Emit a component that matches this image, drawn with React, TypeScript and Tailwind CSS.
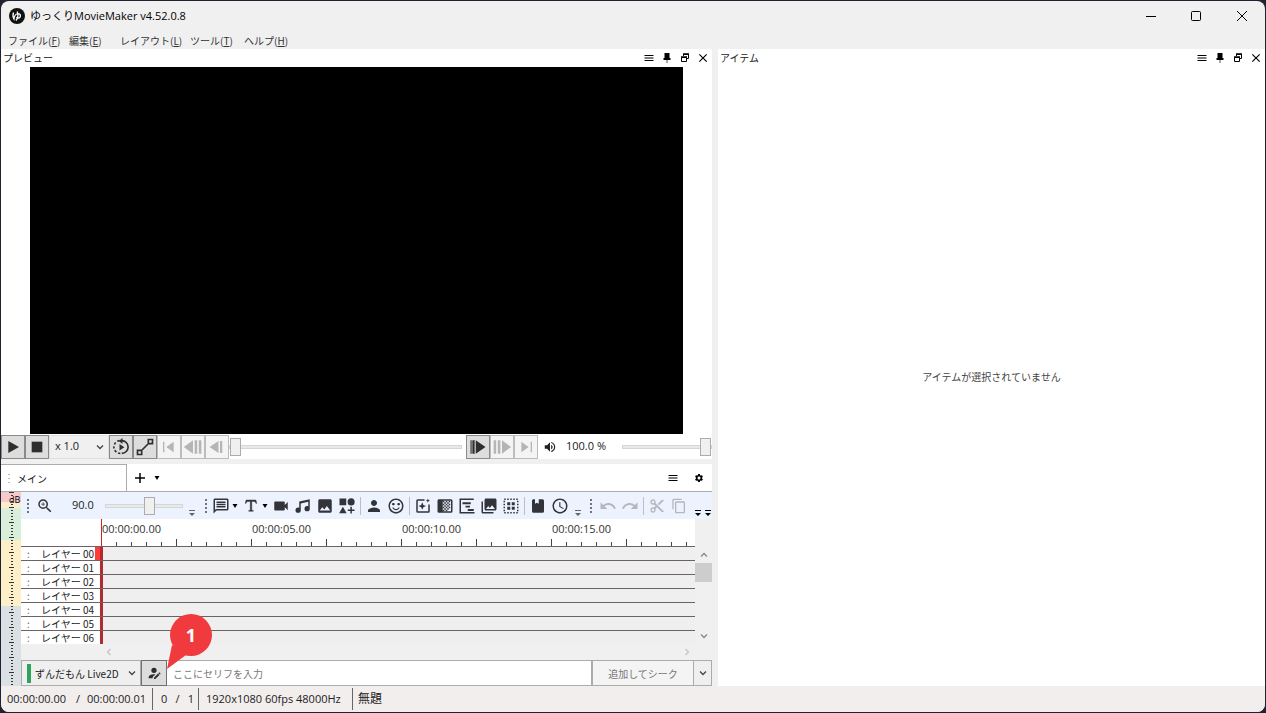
import type { ReactNode } from "react";
import clsx from "clsx";
import {
  MdAccessTime,
  MdClose,
  MdContentCopy,
  MdContentCut,
  MdImage,
  MdMenu,
  MdOutlineMessage,
  MdPerson,
  MdPhotoLibrary,
  MdRedo,
  MdSentimentSatisfiedAlt,
  MdSettings,
  MdUndo,
  MdVideocam,
  MdVolumeUp,
  MdZoomIn,
} from "react-icons/md";

const LATIN = "font-['Open_Sans','Noto_Sans_CJK_JP',sans-serif]";

type IconProps = { children: ReactNode; size?: string };

function Svg({ children, size = "size-[18px]" }: IconProps) {
  return (
    <svg viewBox="0 0 24 24" fill="currentColor" className={clsx("shrink-0", size)} aria-hidden="true">
      {children}
    </svg>
  );
}

const PinIcon = () => (
  <svg viewBox="0 0 10 12" className="h-3 w-2.5" aria-hidden="true">
    <path d="M2.500 1h5v5h1v2h-7V6h1z" fill="#000" />
    <path d="M5 8v3" stroke="#555" />
  </svg>
);

const RestoreIcon = () => (
  <svg viewBox="0 0 10 10" className="size-2.5" fill="none" stroke="#000" aria-hidden="true">
    <path d="M3.500 3V1.500h5v4H7" />
    <path d="M3 1h6" strokeWidth="1.500" />
    <path d="M1.500 4.500h5v4h-5z" />
    <path d="M1 4h6" strokeWidth="1.500" />
  </svg>
);

const TextIcon = () => (
  <Svg>
    <path d="M18.5,4L19.66,8.35L18.7,8.61C18.25,7.74 17.79,6.87 17.26,6.43C16.73,6 16.11,6 15.5,6H13V16.5C13,17 13,17.5 13.33,17.75C13.67,18 14.33,18 15,18V19H9V18C9.67,18 10.33,18 10.67,17.75C11,17.5 11,17 11,16.5V6H8.5C7.89,6 7.27,6 6.74,6.43C6.21,6.87 5.75,7.74 5.3,8.61L4.34,8.35L5.5,4H18.5Z" stroke="currentColor" strokeWidth=".6" />
  </Svg>
);

const MusicIcon = () => (
  <Svg>
    <path d="M21,3V15.5A3.5,3.5 0 0,1 17.5,19A3.5,3.5 0 0,1 14,15.5A3.5,3.5 0 0,1 17.5,12C18.04,12 18.55,12.12 19,12.34V6.47L9,8.6V17.5A3.5,3.5 0 0,1 5.5,21A3.5,3.5 0 0,1 2,17.5A3.5,3.5 0 0,1 5.5,14C6.04,14 6.55,14.12 7,14.34V6L21,3Z" />
  </Svg>
);

const ShapesIcon = () => (
  <Svg>
    <path d="M2 2h9v9H2zM6.500 13l5 8.500h-10zM16.500 13h2v3.500H22v2h-3.500V22h-2v-3.500H13v-2h3.500z" />
    <circle cx="17.500" cy="6.500" r="4.700" />
  </Svg>
);

const EffectIcon = () => (
  <Svg>
    <path d="M14 3H5a2 2 0 0 0-2 2v14a2 2 0 0 0 2 2h14a2 2 0 0 0 2-2v-9h-2v9H5V5h9z" />
    <path d="M11 7l1.500 3.500L16 12l-3.500 1.500L11 17l-1.500-3.500L6 12l3.500-1.500zM18.500 2l.8 2 2 .8-2 .8-.8 2-.8-2-2-.8 2-.8z" />
  </Svg>
);

const CheckerIcon = () => (
  <Svg>
    <path fillRule="evenodd" d="M4 3h16a2 2 0 0 1 2 2v14a2 2 0 0 1-2 2H4a2 2 0 0 1-2-2V5c0-1.100.9-2 2-2zm5 2v14h11V5z" />
    <path d="M9 5h2v2H9zM13 5h2v2h-2zM11 7h2v2h-2zM15 7h2v2h-2zM9 9h2v2H9zM13 9h2v2h-2zM17 9h2v2h-2zM11 11h2v2h-2zM15 11h2v2h-2zM9 13h2v2H9zM13 13h2v2h-2zM17 13h2v2h-2zM11 15h2v2h-2zM15 15h2v2h-2zM9 17h2v2H9zM13 17h2v2h-2zM17 5h2v2h-2z" />
  </Svg>
);

const TimelineIcon = () => (
  <Svg>
    <path d="M2 2h2v18h18v2H2zM4 2h17v2H4zM6 7h11v2.500H6zM10 11.500h6V14h-6zM13 16h8v2.500h-8z" />
  </Svg>
);

const SelectGroupIcon = () => (
  <Svg>
    <path d="M3 3h18v18H3z" fill="none" stroke="currentColor" strokeWidth="2" strokeDasharray="2 2" />
    <path d="M7 7h4v4H7zM13 7h4v4h-4zM7 13h4v4H7zM13 13h4v4h-4z" />
  </Svg>
);

const TemplateIcon = () => (
  <Svg>
    <path d="M6 3h2v6l2.500-1.500L13 9V3h5a2 2 0 0 1 2 2v14a2 2 0 0 1-2 2H6a2 2 0 0 1-2-2V5c0-1.100.9-2 2-2z" />
  </Svg>
);

const LoopIcon = () => (
  <Svg>
    <path d="M13 3.500a8.500 8.500 0 0 1 0 17" fill="none" stroke="currentColor" strokeWidth="2.200" />
    <path d="M11 20.500a8.500 8.500 0 0 1 0-17" fill="none" stroke="currentColor" strokeWidth="2.200" strokeDasharray="3 2.500" />
    <path d="M14 0v8L9 4zM10 8l6.500 4.200L10 16.500z" />
  </Svg>
);

const LineIcon = () => (
  <Svg size="size-5">
    <path d="M3 16h5v5H3zM16 3h5v5h-5zM7.500 16.500l9-9" fill="none" stroke="currentColor" strokeWidth="2" />
  </Svg>
);

const AccountEditIcon = () => (
  <Svg size="size-4">
    <path d="M21.7,13.35L20.7,14.35L18.65,12.3L19.65,11.3C19.86,11.09 20.21,11.09 20.42,11.3L21.7,12.58C21.91,12.79 21.91,13.14 21.7,13.35M12,18.94L18.06,12.88L20.11,14.93L14.06,21H12V18.94M12,14C7.58,14 4,15.79 4,18V20H10V18.11L14,14.11C13.34,14.03 12.67,14 12,14M12,4A4,4 0 0,0 8,8A4,4 0 0,0 12,12A4,4 0 0,0 16,8A4,4 0 0,0 12,4Z" />
  </Svg>
);

function Chevron({ turn, className }: { turn?: string; className?: string }) {
  return (
    <svg viewBox="0 0 8 8" className={clsx("size-2 shrink-0", turn, className)} fill="none" stroke="currentColor" strokeWidth="1.3" aria-hidden="true">
      <path d="M1 2.500l3 3 3-3" />
    </svg>
  );
}

const Caret = () => (
  <svg viewBox="0 0 6 6" className="size-1.5 shrink-0" aria-hidden="true">
    <path d="M.5 1h5L3 5z" />
  </svg>
);

const Gripper = ({ className, short }: { className?: string; short?: boolean }) => (
  <span className={clsx("flex shrink-0 items-center justify-center", className)}>
    <svg viewBox={short ? "0 0 2 9" : "0 0 2 14"} className={clsx("w-0.5", short ? "h-[9px]" : "h-3.5")} aria-hidden="true">
      <path d={short ? "M1 0v9" : "M1 0v14"} stroke="#70747a" strokeWidth={short ? 1 : 2} strokeDasharray={short ? "1 3" : "2 2"} />
    </svg>
  </span>
);

const Overflow = ({ className }: { className?: string }) => (
  <button aria-label="その他" className={clsx("flex h-full shrink-0 items-end justify-center pb-0.5", className)}>
    <svg viewBox="0 0 6 7" className="h-[7px] w-1.5" aria-hidden="true">
      <path d="M0 0h6v1H0zM0 3h6L3 6z" fill="currentColor" />
    </svg>
  </button>
);

const Divider = () => <span className="mx-0.5 h-[18px] w-px shrink-0 bg-[#b9bec8]" />;

function Tool({ label, children, menu, disabled }: { label: string; children: ReactNode; menu?: boolean; disabled?: boolean }) {
  return (
    <button
      aria-label={label}
      disabled={disabled}
      className={clsx("flex h-6 shrink-0 items-center", disabled ? "text-[#b4b7bd]" : "text-[#323439]")}
    >
      <span className="flex w-[22px] justify-center">{children}</span>
      {menu && (
        <span className="flex w-2 justify-start text-black">
          <Caret />
        </span>
      )}
    </button>
  );
}

function PlayButton({ label, children, disabled }: { label: string; children: ReactNode; disabled?: boolean }) {
  return (
    <button
      aria-label={label}
      disabled={disabled}
      className={clsx(
        "flex h-6 w-6 shrink-0 items-center justify-center border",
        disabled ? "border-[#bcbcbc] bg-[#f4f4f4] text-[#b5b5b5]" : "border-[#8a8a8a] bg-[#dddddd] text-[#2e2e2e]",
      )}
    >
      {children}
    </button>
  );
}

function Slider({ label, value, className }: { label: string; value: number; className: string }) {
  return (
    <input
      type="range"
      aria-label={label}
      defaultValue={value}
      className={clsx(
        "h-5 min-w-0 appearance-none bg-transparent [&::-webkit-slider-runnable-track]:h-1 [&::-webkit-slider-runnable-track]:border [&::-webkit-slider-runnable-track]:border-[#d6d6d6] [&::-webkit-slider-runnable-track]:bg-[#e7eaea] [&::-webkit-slider-thumb]:-mt-2 [&::-webkit-slider-thumb]:h-[18px] [&::-webkit-slider-thumb]:w-[11px] [&::-webkit-slider-thumb]:appearance-none [&::-webkit-slider-thumb]:border [&::-webkit-slider-thumb]:border-[#acacac] [&::-webkit-slider-thumb]:bg-[#f0f0f0]",
        className,
      )}
    />
  );
}

function PanelHeader({ title }: { title: string }) {
  return (
    <header className="flex h-[18px] shrink-0 items-center">
      <h2 className="grow pl-0.5 text-[10px] leading-4 text-[#222]">{title}</h2>
      <button aria-label="メニュー" className="flex w-[18px] justify-center"><MdMenu className="size-3" /></button>
      <button aria-label="固定" className="flex w-[18px] justify-center"><PinIcon /></button>
      <button aria-label="元に戻す" className="flex w-[18px] justify-center"><RestoreIcon /></button>
      <button aria-label="閉じる" className="flex w-[18px] justify-center"><MdClose className="size-3.5" /></button>
    </header>
  );
}

const menus = [
  { name: "ファイル", key: "F", width: "min-w-[61px]" },
  { name: "編集", key: "E", width: "min-w-[51px]" },
  { name: "レイアウト", key: "L", width: "min-w-[70px]" },
  { name: "ツール", key: "T", width: "min-w-[54px]" },
  { name: "ヘルプ", key: "H", width: "min-w-[54px]" },
];

function TitleBar() {
  return (
    <header className="shrink-0">
      <div className="flex h-[30px] items-center">
        <svg viewBox="0 0 16 16" className="ml-2 size-4" aria-hidden="true">
          <circle cx="8" cy="8" r="8" fill="#111" />
          <path d="M4.500 4.500c-.8 2.500-.6 5 .5 6.500.2-3 2-5.300 4-5.300 3.200 0 3.200 4.300.2 4.300-1.300 0-1.900-.6-1.900-.6M8.200 3.500c1.200 3 .7 6.500-1.200 9" fill="none" stroke="#fff" strokeWidth="1.300" />
        </svg>
        <h1 className={clsx("grow pl-[5px] text-[11px] text-black", LATIN)}>ゆっくりMovieMaker v4.52.0.8</h1>
        <div className="flex h-full">
          <button aria-label="最小化" className="flex w-[45px] items-center justify-center">
            <svg viewBox="0 0 10 10" className="size-2.5" stroke="#000"><path d="M0 5.500h10" /></svg>
          </button>
          <button aria-label="最大化" className="flex w-[45px] items-center justify-center">
            <svg viewBox="0 0 10 10" className="size-2.5" stroke="#000" fill="none"><rect x=".5" y=".5" width="9" height="9" rx="1" /></svg>
          </button>
          <button aria-label="閉じる" className="flex w-[47px] items-center justify-center">
            <svg viewBox="0 0 10 10" className="size-2.5" stroke="#000"><path d="M0 0l10 10M10 0L0 10" /></svg>
          </button>
        </div>
      </div>
      <nav className="flex h-[18px] items-center pl-[7px] text-[10px] text-[#333]">
        {menus.map((m) => (
          <button key={m.key} className={clsx("shrink-0 text-left", m.width)}>
            {m.name}(<u>{m.key}</u>)
          </button>
        ))}
      </nav>
    </header>
  );
}

function PlayerControls() {
  return (
    <div className={clsx("flex h-[25px] shrink-0 items-center bg-white text-[11px] text-[#222]", LATIN)}>
      <PlayButton label="再生"><Svg size="size-4"><path d="M5 3l16 9-16 9z" /></Svg></PlayButton>
      <PlayButton label="停止"><Svg size="size-4"><path d="M4 4h16v16H4z" /></Svg></PlayButton>
      <label className="grid h-6 w-[60px] shrink-0 items-center border border-[#e0e0e0] bg-[#f0f0f0]">
        <select aria-label="再生速度" className="col-start-1 row-start-1 w-full appearance-none pl-[5px]">
          <option>x 1.0</option>
        </select>
        <Chevron className="col-start-1 row-start-1 mr-1 justify-self-end text-[#444]" />
      </label>
      <PlayButton label="ループ再生"><LoopIcon /></PlayButton>
      <PlayButton label="ガイド線"><LineIcon /></PlayButton>
      <PlayButton label="先頭へ" disabled><Svg size="size-4"><path d="M3 4h2v16H3zM19 4v16L8 12z" /></Svg></PlayButton>
      <PlayButton label="前の編集点" disabled><Svg size="size-5"><path d="M12 4v16L1 12zM14 4h3v16h-3zM19 4h3v16h-3z" /></Svg></PlayButton>
      <PlayButton label="1フレーム戻る" disabled><Svg size="size-[18px]"><path d="M14 4v16L2 12zM16 4h3v16h-3z" /></Svg></PlayButton>
      <Slider label="再生位置" value={0} className="grow" />
      <span className="w-1 shrink-0" />
      <PlayButton label="1フレーム進む"><Svg size="size-[18px]"><path d="M9 3v18l13-9zM2 3h1.500v18H2zM4.500 3h3v18h-3z" /></Svg></PlayButton>
      <PlayButton label="次の編集点" disabled><Svg size="size-5"><path d="M12 4v16l11-8zM2 4h3v16H2zM7 4h3v16H7z" /></Svg></PlayButton>
      <PlayButton label="末尾へ" disabled><Svg size="size-4"><path d="M19 4h2v16h-2zM5 4v16l11-8z" /></Svg></PlayButton>
      <button aria-label="音量" className="flex w-6 shrink-0 justify-center"><MdVolumeUp className="size-3.5" /></button>
      <span className="w-[60px] shrink-0 pl-1">100.0 %</span>
      <Slider label="音量調整" value={100} className="w-[90px] shrink-0" />
    </div>
  );
}

function TimelineToolbar() {
  return (
    <div className="flex h-[27px] shrink-0 items-center overflow-hidden bg-[#edf3fe]">
      <Gripper className="w-[13px]" />
      <Tool label="拡大"><MdZoomIn className="size-[18px]" /></Tool>
      <span className={clsx("w-[49px] shrink-0 pl-4 text-[11px] text-[#222]", LATIN)}>90.0</span>
      <Slider label="表示倍率" value={59} className="w-[78px] shrink-0" />
      <Overflow className="w-[18px] text-[#666]" />
      <Gripper className="w-[9px]" />
      <Tool label="セリフ" menu><MdOutlineMessage className="size-[18px]" /></Tool>
      <Tool label="テキスト" menu><TextIcon /></Tool>
      <Tool label="動画"><MdVideocam className="size-[18px]" /></Tool>
      <Tool label="音声"><MusicIcon /></Tool>
      <Tool label="画像"><MdImage className="size-[18px]" /></Tool>
      <Tool label="図形"><ShapesIcon /></Tool>
      <Divider />
      <Tool label="立ち絵"><MdPerson className="size-[18px]" /></Tool>
      <Tool label="表情"><MdSentimentSatisfiedAlt className="size-[18px]" /></Tool>
      <Divider />
      <Tool label="エフェクト"><EffectIcon /></Tool>
      <Tool label="場面切り替え"><CheckerIcon /></Tool>
      <Tool label="シーン"><TimelineIcon /></Tool>
      <Tool label="フレームバッファ"><MdPhotoLibrary className="size-[18px]" /></Tool>
      <Tool label="グループ制御"><SelectGroupIcon /></Tool>
      <Divider />
      <Tool label="テンプレート"><TemplateIcon /></Tool>
      <Tool label="履歴"><MdAccessTime className="size-[18px]" /></Tool>
      <Overflow className="w-3.5 text-[#666]" />
      <Gripper className="w-3" />
      <Tool label="元に戻す" disabled><MdUndo className="size-[18px]" /></Tool>
      <Tool label="やり直す" disabled><MdRedo className="size-[18px]" /></Tool>
      <Divider />
      <Tool label="切り取り" disabled><MdContentCut className="size-4" /></Tool>
      <Tool label="コピー" disabled><MdContentCopy className="size-4" /></Tool>
      <span className="grow" />
      <Overflow className="w-3 text-black" />
      <Overflow className="w-2 text-black" />
    </div>
  );
}

const times = ["00:00:00.00", "00:00:05.00", "00:00:10.00", "00:00:15.00"];
const ticks = Array.from({ length: 80 }, (_, i) => i);
const layers = ["00", "01", "02", "03", "04", "05", "06"];

function Ruler() {
  return (
    <div className="mr-[17px] flex h-[27px] shrink-0 bg-white pl-20">
      <div className="flex min-w-0 grow flex-col justify-between overflow-hidden border-l border-[#d02020]">
        <div className={clsx("flex h-5 items-center text-[11px] text-[#333]", LATIN)}>
          {times.map((t) => (
            <span key={t} className="w-[150px] shrink-0">{t}</span>
          ))}
        </div>
        <svg className="h-[7px] w-full" aria-hidden="true">
          {ticks.slice(1).map((i) => (
            <path key={i} d={`M${i * 15 - 0.5} ${i % 5 ? 3 : 0}v7`} stroke="#444" />
          ))}
        </svg>
      </div>
    </div>
  );
}

function Layers() {
  return (
    <div className="flex h-[98px] shrink-0">
      <div className="flex min-w-0 grow flex-col">
        {layers.map((n, i) => (
          <div key={n} className="flex h-3.5 shrink-0 border-t border-[#6a6265] bg-[#efefef]">
            <div className="flex w-[79px] shrink-0 items-center bg-white text-[10px] leading-3 text-[#222]">
              <span className="w-5 shrink-0 pl-1.5 text-[#666]">:</span>
              <span className="w-[54px] shrink-0 whitespace-nowrap">レイヤー {n}</span>
              {i === 0 && <span className="h-full grow bg-[#ff3b3b]" />}
            </div>
            <div className="w-[3px] shrink-0 bg-[#b02a2e]" />
          </div>
        ))}
      </div>
      <div className="flex w-[17px] shrink-0 flex-col items-center text-[#888]">
        <button aria-label="上へ" className="flex h-[17px] items-center"><Chevron turn="rotate-180" /></button>
        <div className="h-[19px] w-full bg-[#cdcdcd]" />
        <button aria-label="下へ" className="mt-auto flex h-[17px] items-center"><Chevron /></button>
      </div>
    </div>
  );
}

function LevelMeter() {
  return (
    <div className="relative flex w-5 shrink-0 flex-col">
      <div className="h-2.5 bg-[#f8c9cc]" />
      <div className="h-1.5 bg-[#fdeecb]" />
      <div className="h-8 bg-[#d9eedb]" />
      <div className="h-[66px] bg-[#fdefc8]" />
      <div className="grow bg-[#dbe0e4]" />
      <svg className="absolute inset-0 h-full w-full" aria-hidden="true">
        {ticks.map((i) => (
          <path key={i} d={i % 5 ? `M10 ${i * 3 + 0.5}h2` : `M8 ${i * 3 + 0.5}h5`} stroke="#333" />
        ))}
      </svg>
      <span className={clsx("absolute top-0.5 left-2 text-[9px] leading-3", LATIN)}>dB</span>
    </div>
  );
}

function Callout() {
  return (
    <div className="pointer-events-none absolute bottom-[17px] left-[146px] z-10 h-[56px] w-[46px]">
      <svg viewBox="0 0 46 56" className="absolute inset-0" aria-hidden="true">
        <path d="M0 56L5 32l14 10z" fill="#f03a3d" />
        <circle cx="24" cy="22" r="21" fill="#f03a3d" />
      </svg>
      <span className={clsx("absolute inset-x-0 top-2.5 pl-0.5 text-center text-[18px] leading-6 font-bold text-white", LATIN)}>1</span>
    </div>
  );
}

function VoiceBar() {
  return (
    <div className="relative flex h-[26px] shrink-0 text-[11px]">
      <label className="grid h-full w-[120px] shrink-0 items-center border border-[#acacac] bg-[#efefef]">
        <span className="col-start-1 row-start-1 ml-[5px] h-[19px] w-1 bg-[#2fa35c]" />
        <select aria-label="キャラクター" className="col-start-1 row-start-1 mr-5 ml-[13px] appearance-none overflow-hidden text-[10px] text-[#222]">
          <option>ずんだもん Live2D</option>
        </select>
        <Chevron className="col-start-1 row-start-1 mr-1 justify-self-end text-[#444]" />
      </label>
      <button aria-label="キャラクターの編集" className="flex w-[26px] shrink-0 items-center justify-center border border-[#707070] bg-[#dddddd] text-[#2e2e2e]">
        <AccountEditIcon />
      </button>
      <input
        type="text"
        aria-label="セリフ"
        placeholder="ここにセリフを入力"
        className="min-w-0 grow border border-l-0 border-[#acacac] bg-white pl-1.5 text-[10px] placeholder:text-[#777]"
      />
      <button disabled className="w-[102px] shrink-0 border border-[#acacac] bg-[#f4f4f4] text-[10px] text-[#777]">追加してシーク</button>
      <button aria-label="追加方法" className="flex w-[18px] shrink-0 items-center justify-center border border-l-0 border-[#acacac] bg-[#efefef] text-[#444]">
        <Chevron />
      </button>
      <Callout />
    </div>
  );
}

function Timeline() {
  return (
    <section className="flex shrink-0 flex-col">
      <div className="flex h-7 shrink-0 items-center border-b border-[#acacac] bg-white">
        <button className="flex h-full w-[126px] items-center border-t border-r border-[#acacac] text-[10px] text-[#222]">
          <Gripper short className="w-4" />
          メイン
        </button>
        <button aria-label="シーンを追加" className="flex w-[26px] justify-center">
          <svg viewBox="0 0 10 10" className="size-2.5" stroke="#000" strokeWidth="1.500"><path d="M5 0v10M0 5h10" /></svg>
        </button>
        <button aria-label="シーン一覧" className="flex w-2 justify-center"><Caret /></button>
        <span className="grow" />
        <button aria-label="メニュー" className="flex w-[26px] justify-center"><MdMenu className="size-3" /></button>
        <button aria-label="設定" className="flex w-[26px] justify-center"><MdSettings className="size-2.5" /></button>
      </div>
      <div className="flex">
        <LevelMeter />
        <div className="flex min-w-0 grow flex-col">
          <TimelineToolbar />
          <Ruler />
          <Layers />
          <div className="mr-[17px] flex h-4 shrink-0 items-center justify-between pr-1 pl-[84px] text-[#c4c4c4]">
            <Chevron turn="rotate-90" />
            <Chevron turn="-rotate-90" />
          </div>
          <VoiceBar />
        </div>
      </div>
    </section>
  );
}

function StatusBar() {
  return (
    <footer className={clsx("flex h-[26px] shrink-0 items-center bg-[#f2eeed] text-[11px] whitespace-pre text-[#222]", LATIN)}>
      <span className="w-[69px] pl-1.5">00:00:00.00</span>
      <span className="w-4 pl-1.5">/</span>
      <span className="w-[66px] pl-px">00:00:00.01</span>
      <span className="flex h-[22px] w-[46px] items-center justify-between border-l border-[#666] pr-1 pl-2">
        <span>0</span>
        <span>/</span>
        <span>1</span>
      </span>
      <span className="flex h-[22px] min-w-[154px] items-center border-l border-[#666] pl-[7px]">1920x1080 60fps 48000Hz</span>
      <span className="flex h-[22px] items-center border-l border-[#666] pl-[5px] text-xs">無題</span>
    </footer>
  );
}

export default function App() {
  return (
    <div className="flex h-screen min-h-[520px] flex-col bg-[#20232f] p-px font-['Noto_Sans_CJK_JP',sans-serif]">
      <div className="flex min-h-0 grow flex-col overflow-hidden rounded-lg bg-[#f0f0f0]">
        <TitleBar />
        <main className="grid min-h-0 grow grid-cols-[minmax(0,711fr)_minmax(0,547fr)] gap-1.5">
          <div className="flex min-h-0 flex-col gap-[5px]">
            <section className="flex min-h-0 grow flex-col bg-white">
              <PanelHeader title="プレビュー" />
              <div className="flex min-h-0 grow justify-center">
                <div className="aspect-video h-full bg-black" />
              </div>
              <PlayerControls />
            </section>
            <Timeline />
          </div>
          <section className="flex flex-col bg-white">
            <PanelHeader title="アイテム" />
            <p className="flex grow items-center justify-center text-[10px] text-[#444]">アイテムが選択されていません</p>
          </section>
        </main>
        <StatusBar />
      </div>
    </div>
  );
}
